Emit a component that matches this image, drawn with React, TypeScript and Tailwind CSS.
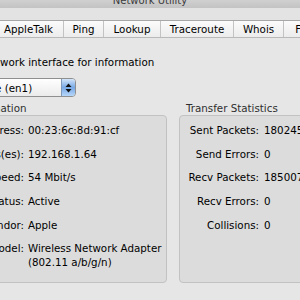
const tabs = [
  { label: 'Info', w: 'w-[39px]', on: true },
  { label: 'Netstat', w: 'w-[57px]', on: false },
  { label: 'AppleTalk', w: 'w-[70px]', on: false },
  { label: 'Ping', w: 'w-[40px]', on: false },
  { label: 'Lookup', w: 'w-[57px]', on: false },
  { label: 'Traceroute', w: 'w-[73px]', on: false },
  { label: 'Whois', w: 'w-[50px]', on: false },
  { label: 'Finger', w: 'w-[55px]', on: false },
  { label: 'Port Scan', w: 'w-[70px]', on: false },
]

const info = [
  ['Hardware Address:', '00:23:6c:8d:91:cf'],
  ['IP Address(es):', '192.168.1.64'],
  ['Link Speed:', '54 Mbit/s'],
  ['Link Status:', 'Active'],
  ['Vendor:', 'Apple'],
]

const stats = [
  ['Sent Packets:', '1802459'],
  ['Send Errors:', '0'],
  ['Recv Packets:', '1850072'],
  ['Recv Errors:', '0'],
  ['Collisions:', '0'],
]

function Row({ label, value, col }: { label: string; value: React.ReactNode; col: string }) {
  return (
    <div className="flex gap-[4px]">
      <div className={`${col} shrink-0 text-right`}>{label}</div>
      <div className="whitespace-nowrap">{value}</div>
    </div>
  )
}

export default function App() {
  return (
    <div className="w-[300px] h-[300px] overflow-hidden bg-[#e6e6e6] font-['DejaVu_Sans',sans-serif] text-[10.3px] leading-[14px] text-black">
      {/* title bar */}
      <div className="h-[8px] overflow-hidden bg-gradient-to-b from-[#d0d0d0] to-[#c3c3c3] flex justify-center">
        <span className="text-[10px] leading-[10px] -mt-[4.5px] text-[#3a3a3a]">Network Utility</span>
      </div>

      <div className="-ml-[110px] w-[560px]">
        <div className="h-[12px] bg-[#e3e3e3]" />

        {/* tabs */}
        <div className="h-[18px] border-y border-t-[#a7a7a7] border-b-[#b9b9b9] bg-gradient-to-b from-[#fbfbfb] to-[#ececec] flex pl-[8px]">
          {tabs.map((t) => (
            <div
              key={t.label}
              className={`${t.w} shrink-0 flex items-center justify-center border-r border-[#c3c3c3] ${
                t.on ? 'bg-gradient-to-b from-[#b7d2f2] to-[#6d9fe0]' : ''
              }`}
            >
              {t.label}
            </div>
          ))}
        </div>

        <p className="mt-[17px] ml-[13px] whitespace-nowrap">Please select a network interface for information</p>

        {/* popup */}
        <div className="mt-[9px] ml-[9px] w-[177px] h-[19px] flex rounded-[4px] border border-[#8f8f8f] bg-gradient-to-b from-white to-[#ebebeb] overflow-hidden">
          <span className="flex-1 pl-[9px] flex items-center whitespace-nowrap">Wireless Interface (en1)</span>
          <span className="w-[14px] border-l border-[#7f98b8] bg-gradient-to-b from-[#d2e4f8] via-[#78a8e6] to-[#b6d7f9] flex items-center justify-center">
            <svg width="7" height="10" viewBox="0 0 7 10">
              <path d="M3.5 0.5 L6.5 4 L0.5 4 Z" fill="#111" />
              <path d="M3.5 9.5 L6.5 6 L0.5 6 Z" fill="#111" />
            </svg>
          </span>
        </div>

        {/* box titles */}
        <div className="mt-[4px] ml-[20px] flex text-[#2e2e2e]">
          <div className="w-[257px] pl-[7.5px] whitespace-nowrap">Interface Information</div>
          <div className="ml-[12px] pl-[7px] whitespace-nowrap">Transfer Statistics</div>
        </div>

        {/* boxes */}
        <div className="ml-[20px] flex gap-[12px]">
          <div className="w-[257px] h-[168px] rounded-[4px] border border-[#c2c2c2] bg-[#dcdcdc] pt-[7px] flex flex-col gap-[9.7px]">
            {info.map(([l, v]) => (
              <Row key={l} label={l} value={v} col="w-[113px]" />
            ))}
            <Row
              label="Model:"
              col="w-[113px]"
              value={
                <>
                  Wireless Network Adapter
                  <br />
                  (802.11 a/b/g/n)
                </>
              }
            />
          </div>
          <div className="w-[230px] h-[168px] rounded-[4px] border border-[#c2c2c2] bg-[#dcdcdc] pt-[7px] flex flex-col gap-[9.7px]">
            {stats.map(([l, v]) => (
              <div key={l} className="flex gap-[5px]">
                <div className="w-[79px] shrink-0 text-right whitespace-nowrap">{l}</div>
                <div>{v}</div>
              </div>
            ))}
          </div>
        </div>
      </div>
    </div>
  )
}
